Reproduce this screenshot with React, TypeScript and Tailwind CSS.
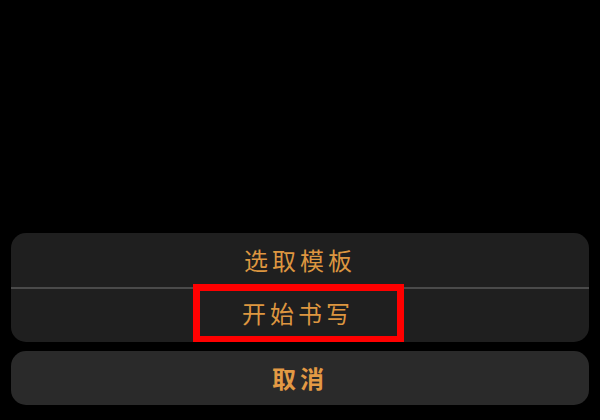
export default function App() {
  const font = { fontFamily: '"Noto Sans CJK SC", "Noto Sans", sans-serif' };
  return (
    <div className="flex h-[420px] w-[600px] flex-col justify-end bg-black px-[11px] pb-[15px]" style={font}>
      <div className="flex flex-col overflow-hidden rounded-[15px] bg-[#1f1f1f]">
        <button className="flex h-[54px] items-center justify-center text-[24px] tracking-[4px] text-[#dd9640]">
          选取模板
        </button>
        <div className="h-[2px] bg-[#4a4a4a]" />
        <div className="flex h-[53px] items-center justify-center">
          <div className="mt-[-6px] mb-[-1px] mr-[4px] flex h-[59px] w-[211px] items-center justify-center border-[7px] border-[#ff0000] text-[24px] tracking-[4px] text-[#dd9640]">
            开始书写
          </div>
        </div>
      </div>
      <button className="mt-[9px] flex h-[54px] items-center justify-center rounded-[15px] bg-[#2a2a2a] text-[24px] font-bold tracking-[4px] text-[#e39a44]">
        取消
      </button>
    </div>
  );
}
